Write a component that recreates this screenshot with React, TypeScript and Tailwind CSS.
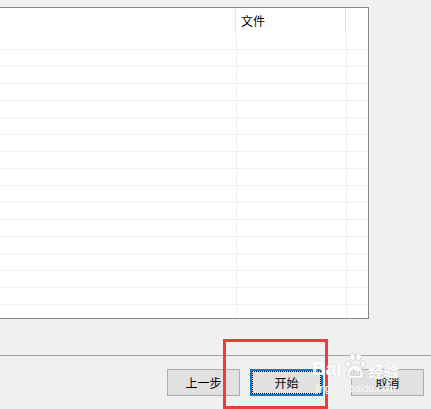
import React from 'react';

const ROWS = 16;

const Button: React.FC<{ label: string; focused?: boolean; className?: string }> = ({ label, focused, className }) => (
  <div
    className={
      'relative w-[73px] h-[27px] flex items-center justify-center bg-[#e1e1e1] text-[12px] text-black ' +
      (focused ? 'border-2 border-[#0078d7] ' : 'border border-[#adadad] ') +
      (className ?? '')
    }
  >
    {focused && <div className="absolute inset-0 border border-dotted border-black"></div>}
    <span className="relative">{label}</span>
  </div>
);

const BodyRow: React.FC<{ last?: boolean }> = ({ last }) => (
  <div className={'flex ' + (last ? 'flex-1' : 'h-[17px] shrink-0 border-b border-[#f0f0f0]')}>
    <div className="w-[238px] border-r border-[#f0f0f0]"></div>
    <div className="w-[110px] border-r border-[#f0f0f0]"></div>
    <div className="flex-1"></div>
  </div>
);

const App: React.FC = () => {
  return (
    <div
      className="relative w-[431px] h-[409px] overflow-hidden bg-[#f0f0f0] flex flex-col pt-[7px]"
      style={{ fontFamily: '"Noto Sans CJK SC", "Liberation Sans", sans-serif' }}
    >
      {/* list view */}
      <div className="ml-[-2px] w-[371px] h-[312px] shrink-0 border border-[#828790] bg-white flex flex-col">
        <div className="flex h-[25px] shrink-0">
          <div className="w-[237px] border-r border-[#e5e5e5]"></div>
          <div className="w-[110px] border-r border-[#e5e5e5] pl-[5px] flex items-center text-[12px] leading-none text-black">
            文件
          </div>
          <div className="flex-1"></div>
        </div>
        {Array.from({ length: ROWS }).map((_, i) => (
          <BodyRow key={i} />
        ))}
        <BodyRow last />
      </div>

      {/* separator */}
      <div className="mt-[36px] h-px w-full bg-[#a0a0a0] shrink-0"></div>

      {/* buttons */}
      <div className="flex mt-[13px] pl-[167px]">
        <Button label="上一步" />
        <Button label="开始" focused className="ml-[10px]" />
        <Button label="取消" className="ml-[28px]" />
      </div>

      {/* red annotation */}
      <div className="absolute left-[223px] top-[339px] w-[105px] h-[70px] border-[3px] border-[#ee3b3b]"></div>

      {/* watermark */}
      <div className="absolute left-[312px] top-[352px] w-[100px] h-[52px] pointer-events-none text-white [text-shadow:0_0_1px_#c8c8c8]">
        <div className="flex items-end">
          <span className="text-[19px] font-bold leading-none" style={{ fontFamily: '"Liberation Sans", sans-serif' }}>
            Bai
          </span>
          <svg width="24" height="30" viewBox="0 0 22 30" className="ml-[1px] mb-[-4px]">
            <g fill="#ffffff" stroke="#cdcdcd" strokeWidth="0.8">
              <ellipse cx="4" cy="12" rx="2.6" ry="3.2" />
              <ellipse cx="8.5" cy="5" rx="2.8" ry="3.5" />
              <ellipse cx="14.5" cy="5" rx="2.8" ry="3.5" />
              <ellipse cx="19" cy="12" rx="2.6" ry="3.2" />
              <path d="M11 13 C6 13 2 20 3 24 C4 28 9 26 11 26 C13 26 18 28 19 24 C20 20 16 13 11 13 Z" />
            </g>
            <text x="11" y="24" textAnchor="middle" fontSize="9" fontWeight="bold" fill="#d6d6d6" fontFamily="Liberation Sans, sans-serif">
              du
            </text>
          </svg>
          <span className="ml-[2px] text-[15px] font-bold leading-none">经验</span>
        </div>
        <div className="mt-[6px] text-[10px] leading-none ml-[3px]" style={{ fontFamily: '"Liberation Sans", sans-serif' }}>
          jingyan.baidu.com
        </div>
      </div>
    </div>
  );
};

export default App;
